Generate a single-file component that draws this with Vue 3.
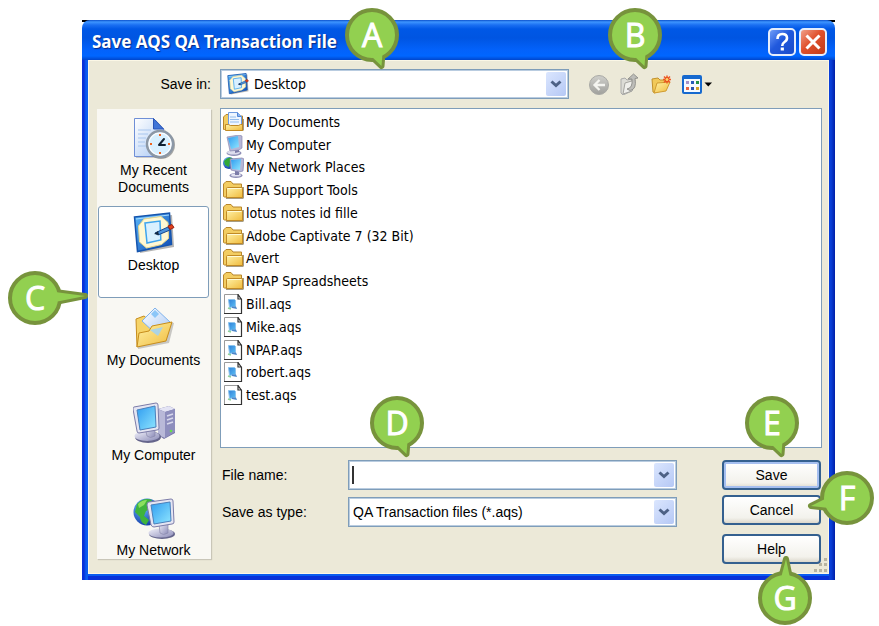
<script setup>
import { ref } from 'vue'

const places = [
  { label: 'My Recent Documents', icon: 'recent' },
  { label: 'Desktop', icon: 'desktop' },
  { label: 'My Documents', icon: 'documents' },
  { label: 'My Computer', icon: 'computer' },
  { label: 'My Network', icon: 'network' },
]
const activePlace = ref('Desktop')

const files = [
  { name: 'My Documents', icon: 'docs-folder' },
  { name: 'My Computer', icon: 'monitor' },
  { name: 'My Network Places', icon: 'network-small' },
  { name: 'EPA Support Tools', icon: 'folder' },
  { name: 'lotus notes id fille', icon: 'folder' },
  { name: 'Adobe Captivate 7 (32 Bit)', icon: 'folder' },
  { name: 'Avert', icon: 'folder' },
  { name: 'NPAP Spreadsheets', icon: 'folder' },
  { name: 'Bill.aqs', icon: 'file' },
  { name: 'Mike.aqs', icon: 'file' },
  { name: 'NPAP.aqs', icon: 'file' },
  { name: 'robert.aqs', icon: 'file' },
  { name: 'test.aqs', icon: 'file' },
]

const callouts = [
  { letter: 'A', tail: '-2,20 9.5,31 10.5,18' },
  { letter: 'B', tail: '-2,20 9.5,31 10.5,18' },
  { letter: 'C', tail: '20,-6 50,-2 20,4' },
  { letter: 'D', tail: '-2,20 9.5,31 10.5,18' },
  { letter: 'E', tail: '-2,20 9.5,31 10.5,18' },
  { letter: 'F', tail: '-20,0 -36,8 -18,10' },
  { letter: 'G', tail: '-4,-20 1,-39 5,-20' },
]

const fileName = ref('')
</script>

<template>
  <main class="page">
    <svg class="defs" width="0" height="0" aria-hidden="true">
      <defs>
        <linearGradient id="gBlue" x1="0" y1="0" x2="1" y2="1">
          <stop offset="0" stop-color="#5cb8f8" /><stop offset="1" stop-color="#0b49b5" />
        </linearGradient>
        <linearGradient id="gGlyph" x1="0" y1="0" x2="1" y2="1">
          <stop offset="0" stop-color="#2f7fd8" /><stop offset="1" stop-color="#5cc0f5" />
        </linearGradient>
        <linearGradient id="gScreen" x1="0" y1="0" x2="1" y2="1">
          <stop offset="0" stop-color="#2f9cf0" /><stop offset="1" stop-color="#8fe6ff" />
        </linearGradient>
        <linearGradient id="gGray" x1="0" y1="0" x2="1" y2="1">
          <stop offset="0" stop-color="#f2f2fa" /><stop offset="1" stop-color="#8b8bb8" />
        </linearGradient>
        <linearGradient id="gFolder" x1="0" y1="0" x2="1" y2="1">
          <stop offset="0" stop-color="#fff2a8" /><stop offset="1" stop-color="#f0bb3c" />
        </linearGradient>
        <linearGradient id="gPaper" x1="0" y1="0" x2="1" y2="1">
          <stop offset="0" stop-color="#ffffff" /><stop offset="1" stop-color="#a9c8f4" />
        </linearGradient>
        <radialGradient id="gGlobe" cx="0.35" cy="0.3" r="0.8">
          <stop offset="0" stop-color="#6cc0ff" /><stop offset="1" stop-color="#0a2fa0" />
        </radialGradient>
        <linearGradient id="gBack" x1="0" y1="0" x2="0" y2="1">
          <stop offset="0" stop-color="#cfcfcb" /><stop offset="1" stop-color="#a0a09c" />
        </linearGradient>
      </defs>

      <symbol id="recent" viewBox="0 0 42 42">
        <path d="M3 3h20l10 11v27H3z" fill="#777" opacity=".35" />
        <path d="M1.500 1.500h19l10 10.500v27.500h-29z" fill="url(#gPaper)" stroke="#6f8fd6" />
        <path d="M20.500 1.500v10.500h10z" fill="#3f74d8" stroke="#2a55b8" />
        <path d="M5 13h13M5 17h10M5 21h8M5 25h7M5 29h8" stroke="#a8c6ee" />
        <circle cx="28" cy="28" r="14" fill="#555" opacity=".5" />
        <circle cx="27" cy="27" r="13" fill="#eef7ff" stroke="#8c98a6" stroke-width="2.500" />
        <circle cx="27" cy="27" r="11" fill="#d8f0ff" stroke="#fff" />
        <path d="M27 17v2M27 35v2M17 27h2M35 27h2" stroke="#f0641e" stroke-width="2" />
        <path d="M26 28l5-6M26 28h6" stroke="#123" stroke-width="2" stroke-linecap="round" />
      </symbol>

      <symbol id="desktop" viewBox="0 0 42 42">
        <path d="M3 7l36-4 2 32-34 6z" fill="#444" opacity=".4" />
        <path d="M1.500 5l35-4 2 31.500-34 7z" fill="url(#gBlue)" stroke="#1554ad" stroke-width="1.500" />
        <path d="M3 7l33-4" stroke="#a8dcff" />
        <path d="M11 7l17-2.500 7 6 .5 16-7 6-15 3.500-7-6-1-16z" fill="#fff8d4" stroke="#e8d88c" />
        <path d="M12 11l15-2 .8 19L14 31z" fill="#d9f0ff" stroke="#3ea4ee" stroke-width="1.500" />
        <path d="M22 21l13-6 2 3-12 5z" fill="#4d94dc" stroke="#18488f" />
        <path d="M21 22l4-3 1 4z" fill="#162840" />
        <path d="M35 14l4-1.500 2 3-4 2z" fill="#e1411c" stroke="#9c2010" />
      </symbol>

      <symbol id="documents" viewBox="0 0 42 42">
        <path d="M5 13l10-3 26 6-5 20-31 6z" fill="#555" opacity=".3" />
        <path d="M3 12l8-3 5 4 4 10L4 40z" fill="#f6d469" stroke="#c78d1c" />
        <path d="M22 1L37 15 24 28 9 14z" fill="url(#gPaper)" stroke="#7eb2ec" />
        <path d="M22 3l4 4-4 4-4-4z" fill="#8bc6f8" />
        <path d="M4 40L6 26l10-2 3-5 20-4-6 19z" fill="url(#gFolder)" stroke="#c78d1c" />
        <path d="M17 23l13-3-5 9z" fill="#9fd2f7" opacity=".85" />
      </symbol>

      <symbol id="monitor-big" viewBox="0 0 42 42">
        <ellipse cx="15" cy="35" rx="13" ry="6" fill="#66668c" />
        <ellipse cx="14" cy="34" rx="12.500" ry="5" fill="url(#gGray)" />
        <path d="M12 25l10-2v11q-5 3-8 0z" fill="url(#gGray)" stroke="#8b8bae" stroke-width=".7" />
        <path d="M1 5l22-4q2 0 2 2l1 23q0 2-2 2L6 31q-2 0-2-2L0 7q0-2 1-2z" fill="#e5e5f2" stroke="#7c7ca8" />
        <path d="M4 8l18-4 1 21-16 3z" fill="url(#gScreen)" stroke="#4a80bb" />
      </symbol>

      <symbol id="computer" viewBox="0 0 42 42">
        <path d="M25 7l11-3 6 3v24l-11 6-6-4z" fill="#7474a5" />
        <path d="M25 7l11-3 6 3-10 3z" fill="#e4e4f4" />
        <path d="M25 7l7 3v26l-7-3z" fill="#b9b9d8" />
        <path d="M32 10l10-3v23l-10 6z" fill="#8e8ebd" />
        <path d="M34 14l6-2M34 18l6-2M34 22l6-2" stroke="#d8d8ec" stroke-width="1.500" />
        <circle cx="38" cy="29" r="1.300" fill="#65e04b" />
        <use href="#monitor-big" width="42" height="42" />
      </symbol>

      <symbol id="network" viewBox="0 0 42 42">
        <circle cx="14" cy="15" r="13.500" fill="url(#gGlobe)" />
        <path d="M4 7q7-7 15-4l-3 5 3 3-6 3-2 5 5 4-3 5q-6-3-6-8L2 15z" fill="#3fb43c" />
        <path d="M5 7q4-4 9-4l-3 5-5 3z" fill="#8be05e" />
        <ellipse cx="29" cy="37" rx="13" ry="5" fill="#66668c" />
        <ellipse cx="28" cy="36" rx="12.500" ry="4.500" fill="url(#gGray)" />
        <path d="M26 27l9-1v10q-5 3-8 0z" fill="url(#gGray)" stroke="#8b8bae" stroke-width=".7" />
        <path d="M16 5l22-3q2 0 2 2l1 21q0 2-2 2l-18 3q-2 0-3-2L14 8q0-3 2-3z" fill="#e5e5f2" stroke="#7c7ca8" />
        <path d="M18 8l19-3 1 19-17 3z" fill="url(#gScreen)" stroke="#4a80bb" />
      </symbol>

      <symbol id="monitor" viewBox="0 0 21 21">
        <ellipse cx="11" cy="18" rx="7.500" ry="3" fill="#8f8fb6" />
        <ellipse cx="10.500" cy="17.500" rx="6.500" ry="2" fill="#dddded" />
        <path d="M12 13l4-1v5l-4 1z" fill="#7c7ca8" />
        <path d="M4 2l12-2 3 1v12l-3 2-9 1z" fill="#b6b6d6" stroke="#8989b2" stroke-width=".7" />
        <path d="M5 3l10-2 1 11-8 2z" fill="url(#gScreen)" />
      </symbol>

      <symbol id="network-small" viewBox="0 0 21 21">
        <circle cx="6" cy="6" r="6" fill="url(#gGlobe)" />
        <path d="M1 4q4-5 8-3L7 5l-1 5-4-2z" fill="#32a838" />
        <ellipse cx="13" cy="18.500" rx="6.500" ry="2.500" fill="#8f8fb6" />
        <ellipse cx="13" cy="18" rx="5" ry="1.600" fill="#e2e2f0" />
        <path d="M12 13h4v5h-4z" fill="#7c7ca8" />
        <path d="M7 2l12-1 2 1-1 12-4 1-8-2z" fill="#b6b6d6" stroke="#8080ac" stroke-width=".7" />
        <path d="M8 3l10-1-1 11-8-1z" fill="url(#gScreen)" />
      </symbol>

      <symbol id="folder" viewBox="0 0 21 21">
        <path d="M2 7h19v11l-1 1H3z" fill="#6b5a30" opacity=".6" />
        <path d="M.500 16.500V4L3 1.500h5L10 4h8.500v13h-17z" fill="#f3cd62" stroke="#b8862a" />
        <path d="M3.500 17.500v-9q0-1 1-1h14q1 0 1 1v9z" fill="url(#gFolder)" stroke="#c18a25" />
        <path d="M4.500 8.500h14" stroke="#fffbd6" />
      </symbol>

      <symbol id="docs-folder" viewBox="0 0 21 21">
        <path d="M2 7h19v11l-1 1H3z" fill="#6b5a30" opacity=".6" />
        <path d="M.500 17.500V5L3 2.500h5L10 4h9.500v13.500h-18z" fill="#f3cd62" stroke="#b8862a" />
        <path d="M5.500.500h9l4 4v9h-13z" fill="#eef6ff" stroke="#6e9be0" />
        <path d="M14.500.500v4h4" fill="#8db8f0" stroke="#5286d5" />
        <path d="M7 5h6M7 7.500h9M7 10h9" stroke="#93bcec" />
        <path d="M2.500 18.500v-6h3l2 1h8l2-1h2v6z" fill="url(#gFolder)" stroke="#c18a25" />
      </symbol>

      <symbol id="file" viewBox="0 0 21 21">
        <path d="M1.500.500h14l3 4v15h-17z" fill="#fff" />
        <path d="M1.500 20V.500h14" fill="none" stroke="#9a9a9a" />
        <path d="M1 19.500h17.500" stroke="#333" />
        <path d="M18.500 20V5.500l-3.500-5v4.500h4" fill="none" stroke="#333" stroke-width="1.200" />
        <path d="M5.500 5.500h6l1 1v6l-6 1z" fill="url(#gGlyph)" stroke="#8cc4ee" />
        <path d="M9 12.500h4l1 2.500-5-1z" fill="#4c86c8" />
        <path d="M5 14l3 1" stroke="#8fd09a" stroke-width="1.500" />
      </symbol>
    </svg>

    <section class="dialog" aria-label="Save AQS QA Transaction File">
      <header class="titlebar">
        <h1 class="title">Save AQS QA Transaction File</h1>
        <button class="caption-button help" type="button" aria-label="What's this">
          <svg viewBox="0 0 24 24" width="24" height="24">
            <path d="M7.500 9q0-5 4.800-5 4.700 0 4.700 4 0 2.500-2.500 4-2.300 1.500-2.300 4" fill="none" stroke="#fff" stroke-width="2.600" />
            <path d="M10.700 17.500h3.200v3h-3.200z" fill="#fff" />
          </svg>
        </button>
        <button class="caption-button close" type="button" aria-label="Close">
          <svg viewBox="0 0 24 24" width="24" height="24">
            <path d="M5.500 5.500l13 13M18.500 5.500l-13 13" stroke="#fff" stroke-width="3" />
          </svg>
        </button>
      </header>

      <form class="body" @submit.prevent>
        <label class="save-in-label" for="save-in">Save in:</label>
        <div class="location">
          <div class="combo location-combo">
            <svg class="combo-icon" width="22" height="22" aria-hidden="true"><use href="#desktop" /></svg>
            <select id="save-in" class="field tahoma">
              <option>Desktop</option>
            </select>
            <span class="arrow" aria-hidden="true"><svg viewBox="0 0 12 8" width="12" height="8"><path d="M1.500 1.500L6 5.500l4.500-4" fill="none" stroke="#4d6185" stroke-width="3" /></svg></span>
          </div>
          <nav class="toolbar" aria-label="Folder tools">
            <button class="tool" type="button" aria-label="Back">
              <svg viewBox="0 0 22 22" width="22" height="22">
                <circle cx="11" cy="12" r="9.500" fill="url(#gBack)" stroke="#a9a9a5" />
                <path d="M11.500 7L6.500 12l5 5M7 12h10" fill="none" stroke="#f4f4f0" stroke-width="2.300" />
              </svg>
            </button>
            <button class="tool" type="button" aria-label="Up one level">
              <svg viewBox="0 0 22 22" width="22" height="22">
                <path d="M2 6l4-1 2 2 5-1v12l-9 4-2-2z" fill="#dcdcd6" stroke="#aaa" />
                <path d="M6 10l10-3-3 11-9 3z" fill="#efefeb" stroke="#a5a5a0" />
                <path d="M8 16q6-1 5-10H9l5.500-5L19 5l-3 .500q2 11-5 12z" fill="#bdbdb9" stroke="#8c8c88" stroke-width=".9" />
              </svg>
            </button>
            <button class="tool" type="button" aria-label="Create new folder">
              <svg viewBox="0 0 22 22" width="22" height="22">
                <path d="M2 6l6-1 2 2h7v3L5 20l-2-1z" fill="#f1c95a" stroke="#c2912b" />
                <path d="M7 10l13-1-4 9-12 2z" fill="url(#gFolder)" stroke="#d09c31" />
                <path d="M17 2.500v8M13 6.500h8M14 3.500l6 6M20 3.500l-6 6" stroke="#ef5a25" stroke-width="1.500" />
                <circle cx="17" cy="6.500" r="2" fill="#ffd36b" stroke="#e64a1b" />
              </svg>
            </button>
            <button class="tool" type="button" aria-label="Views">
              <svg viewBox="0 0 32 22" width="32" height="22">
                <rect x="1" y="2" width="20" height="19" rx="2" fill="#1669cf" />
                <path d="M3 6h16v13H3z" fill="#f5f9ff" />
                <path d="M5 8h3v3H5z" fill="#a592c8" /><path d="M10 8h3v3h-3z" fill="#275bbb" /><path d="M15 8h3v3h-3z" fill="#259347" />
                <path d="M5 14h3v3H5z" fill="#e76543" /><path d="M10 14h3v3h-3z" fill="#2b53ae" /><path d="M15 14h3v3h-3z" fill="#d6a22b" />
                <path d="M23.500 9.500h7.500l-3.700 4z" fill="#000" />
              </svg>
            </button>
          </nav>
        </div>

        <nav class="places" aria-label="Places">
          <button
            v-for="place in places"
            :key="place.label"
            type="button"
            class="place"
            :class="{ active: place.label === activePlace }"
            @click="activePlace = place.label"
          >
            <svg class="place-icon" width="42" height="42" aria-hidden="true"><use :href="'#' + place.icon" /></svg>
            <span class="place-label">{{ place.label }}</span>
          </button>
        </nav>

        <ul class="files">
          <li v-for="file in files" :key="file.name" class="file">
            <svg width="21" height="21" aria-hidden="true"><use :href="'#' + file.icon" /></svg>
            <span>{{ file.name }}</span>
          </li>
        </ul>

        <div class="footer">
          <div class="fields">
            <label for="file-name">File name:</label>
            <div class="combo">
              <span v-if="!fileName" class="caret" aria-hidden="true"></span>
              <input id="file-name" v-model="fileName" class="field" type="text" autocomplete="off" />
              <span class="arrow" aria-hidden="true"><svg viewBox="0 0 12 8" width="12" height="8"><path d="M1.500 1.500L6 5.500l4.500-4" fill="none" stroke="#4d6185" stroke-width="3" /></svg></span>
            </div>
            <label for="file-type">Save as type:</label>
            <div class="combo">
              <select id="file-type" class="field">
                <option>QA Transaction files (*.aqs)</option>
              </select>
              <span class="arrow" aria-hidden="true"><svg viewBox="0 0 12 8" width="12" height="8"><path d="M1.500 1.500L6 5.500l4.500-4" fill="none" stroke="#4d6185" stroke-width="3" /></svg></span>
            </div>
          </div>
          <div class="actions">
            <button class="push default" type="submit">Save</button>
            <button class="push" type="button">Cancel</button>
            <button class="push help-button" type="button">Help</button>
          </div>
        </div>
      </form>

      <svg class="grip" viewBox="0 0 15 15" width="15" height="15" aria-hidden="true">
        <path d="M11 0h3v3h-3zM6 5h3v3H6zM11 5h3v3h-3zM1 11h3v3H1zM6 11h3v3H6zM11 11h3v3h-3z" fill="#b8b4a2" />
      </svg>

      <svg
        v-for="callout in callouts"
        :key="callout.letter"
        class="callout"
        :class="'callout-' + callout.letter.toLowerCase()"
        viewBox="-27 -27 54 54"
        width="54"
        height="54"
      >
        <polygon :points="callout.tail" fill="#92d050" stroke="#77933c" stroke-width="6" stroke-linejoin="round" />
        <circle r="25" fill="#92d050" stroke="#77933c" stroke-width="4" />
        <polygon :points="callout.tail" fill="#92d050" />
        <text class="callout-letter" y="12" text-anchor="middle">{{ callout.letter }}</text>
      </svg>
    </section>
  </main>
</template>

<style>
body {
  background: #fff;
}
</style>

<style scoped>
.page {
  padding: 20px 44px 46px 82px;
  font-family: "Liberation Sans", Arial, sans-serif;
  font-size: 14px;
  line-height: 17px;
  color: #000;
}
.defs {
  position: absolute;
}
.dialog {
  position: relative;
  padding-bottom: 6px;
  background:
    linear-gradient(#000 0 2px, #fff 2px 12px, transparent 12px),
    linear-gradient(to right, #0831d9 0 2px, #0a5cf0 4px 8px, #0a3fd8 calc(100% - 4px), #001fa8 100%);
}
.titlebar {
  display: flex;
  align-items: center;
  gap: 3px;
  height: 40px;
  box-sizing: border-box;
  padding: 4px 8px 0 10px;
  border-radius: 8px 8px 0 0;
  background: linear-gradient(#0b50cc 0, #3d95ff 2px, #1a6ff2 5px, #0058e6 9px, #0055e2 18px, #0362fb 30px, #0066ff 36px, #0046cc 40px);
}
.title {
  flex: 1;
  margin: 0;
  font-family: "Noto Sans", sans-serif;
  font-size: 17px;
  line-height: 24px;
  font-weight: 700;
  color: #fff;
  text-shadow: 1px 1px 1px #0a2a85;
}
.caption-button {
  width: 28px;
  height: 28px;
  box-sizing: border-box;
  display: grid;
  place-items: center;
  padding: 0;
  border: 2px solid #e6eefc;
  border-radius: 5px;
}
.help {
  background: linear-gradient(135deg, #6f9cf8, #2159dd 45%, #1a4bc9);
}
.close {
  background: linear-gradient(135deg, #f0a08a, #e0502c 45%, #c03a18);
}
.body {
  display: grid;
  grid-template-columns: 114px 1fr;
  column-gap: 9px;
  margin: 0 6px;
  padding: 9px 7px 10px 9px;
  background: #ece9d8;
  box-shadow: 0 2px 0 #0a5cf0, 0 6px 0 #0831d9, inset 1px 1px 0 #fbf7e6, inset -1px -1px 0 #fbf7e6;
}
.save-in-label {
  align-self: center;
  text-align: right;
}
.location {
  display: flex;
  align-items: center;
}
.location-combo {
  flex: 1;
}
.combo {
  display: flex;
  align-items: center;
  height: 30px;
  box-sizing: border-box;
  padding: 2px;
  border: 1px solid #7f9db9;
  box-shadow: inset 0 0 0 1px #b9cce0;
  background: #fff;
}
.combo-icon {
  margin-left: 4px;
}
.field {
  flex: 1;
  min-width: 0;
  height: 100%;
  padding: 0 2px;
  border: 0;
  outline: 0;
  appearance: none;
  background: transparent;
  color: #000;
  font: inherit;
}
.tahoma {
  padding-left: 5px;
  font-family: "DejaVu Sans Condensed", "DejaVu Sans", sans-serif;
}
.arrow {
  display: grid;
  place-items: center;
  width: 20px;
  height: 24px;
  border-radius: 2px;
  background: linear-gradient(135deg, #dbe6fe, #b5c8f5);
  pointer-events: none;
}
.caret {
  width: 2px;
  height: 18px;
  margin-left: 1px;
  background: #333;
}
.toolbar {
  display: flex;
  align-items: center;
  gap: 9px;
  width: 234px;
  padding-left: 19px;
}
.tool {
  display: block;
  padding: 0;
  border: 0;
  background: none;
}
.tool svg {
  display: block;
}
.places {
  display: flex;
  flex-direction: column;
  grid-row: 2 / 4;
  align-self: start;
  margin-top: 10px;
  padding: 2px 2px 0 1px;
  gap: 3px;
  overflow: hidden;
  background: #f9f8f3;
  box-shadow: 1px 1px 1px #c9c6b8;
}
.place {
  display: flex;
  flex-direction: column;
  align-items: center;
  gap: 3px;
  min-height: 92px;
  box-sizing: border-box;
  padding: 5px 10px 0;
  border: 1px solid transparent;
  border-radius: 3px;
  background: transparent;
  font: inherit;
  line-height: 17px;
  color: #000;
}
.place:last-child {
  min-height: 0;
  border-bottom: 0;
}
.place.active {
  background: #fff;
  border-color: #7f9db9;
}
.place-icon {
  flex: none;
}
.place-label {
  white-space: nowrap;
}
.place:first-child .place-label {
  white-space: normal;
}
.files {
  display: grid;
  grid-auto-rows: 1fr;
  height: 340px;
  box-sizing: border-box;
  margin: 9px 0 0;
  padding: 2px 2px 40px;
  border: 1px solid #7f9db9;
  background: #fff;
  list-style: none;
  font-family: "DejaVu Sans Condensed", "DejaVu Sans", sans-serif;
}
.file {
  display: flex;
  align-items: center;
  gap: 2px;
}
.footer {
  display: flex;
  gap: 45px;
  margin-top: 12px;
  padding: 0 1px 0 2px;
}
.fields {
  flex: 1;
  display: grid;
  grid-template-columns: 126px 1fr;
  grid-auto-rows: 30px;
  row-gap: 7px;
  align-items: center;
}
.actions {
  display: flex;
  flex-direction: column;
  gap: 5px;
  width: 99px;
}
.push {
  height: 30px;
  box-sizing: border-box;
  border: 2px solid #34608f;
  border-radius: 4px;
  background: linear-gradient(#fff, #f3f2ec 80%, #dcd8cc);
  font: inherit;
  color: #000;
}
.default {
  box-shadow: inset 0 0 0 2px #a5bff0;
}
.help-button {
  margin-top: 4px;
}
.grip {
  position: absolute;
  right: 7px;
  bottom: 7px;
}
.callout {
  position: absolute;
  overflow: visible;
  pointer-events: none;
}
.callout-letter {
  font-family: "Open Sans", "Noto Sans", sans-serif;
  font-size: 32px;
  fill: #fff;
  stroke: #fff;
  stroke-width: 1px;
}
.callout-a { left: 263px; top: -12px; }
.callout-b { right: 173px; top: -12px; }
.callout-c { left: -74px; top: 251px; }
.callout-d { left: 288px; bottom: 130px; }
.callout-e { right: 36px; bottom: 130px; }
.callout-f { right: -39px; bottom: 55px; }
.callout-g { right: 23px; bottom: -45px; }
</style>
